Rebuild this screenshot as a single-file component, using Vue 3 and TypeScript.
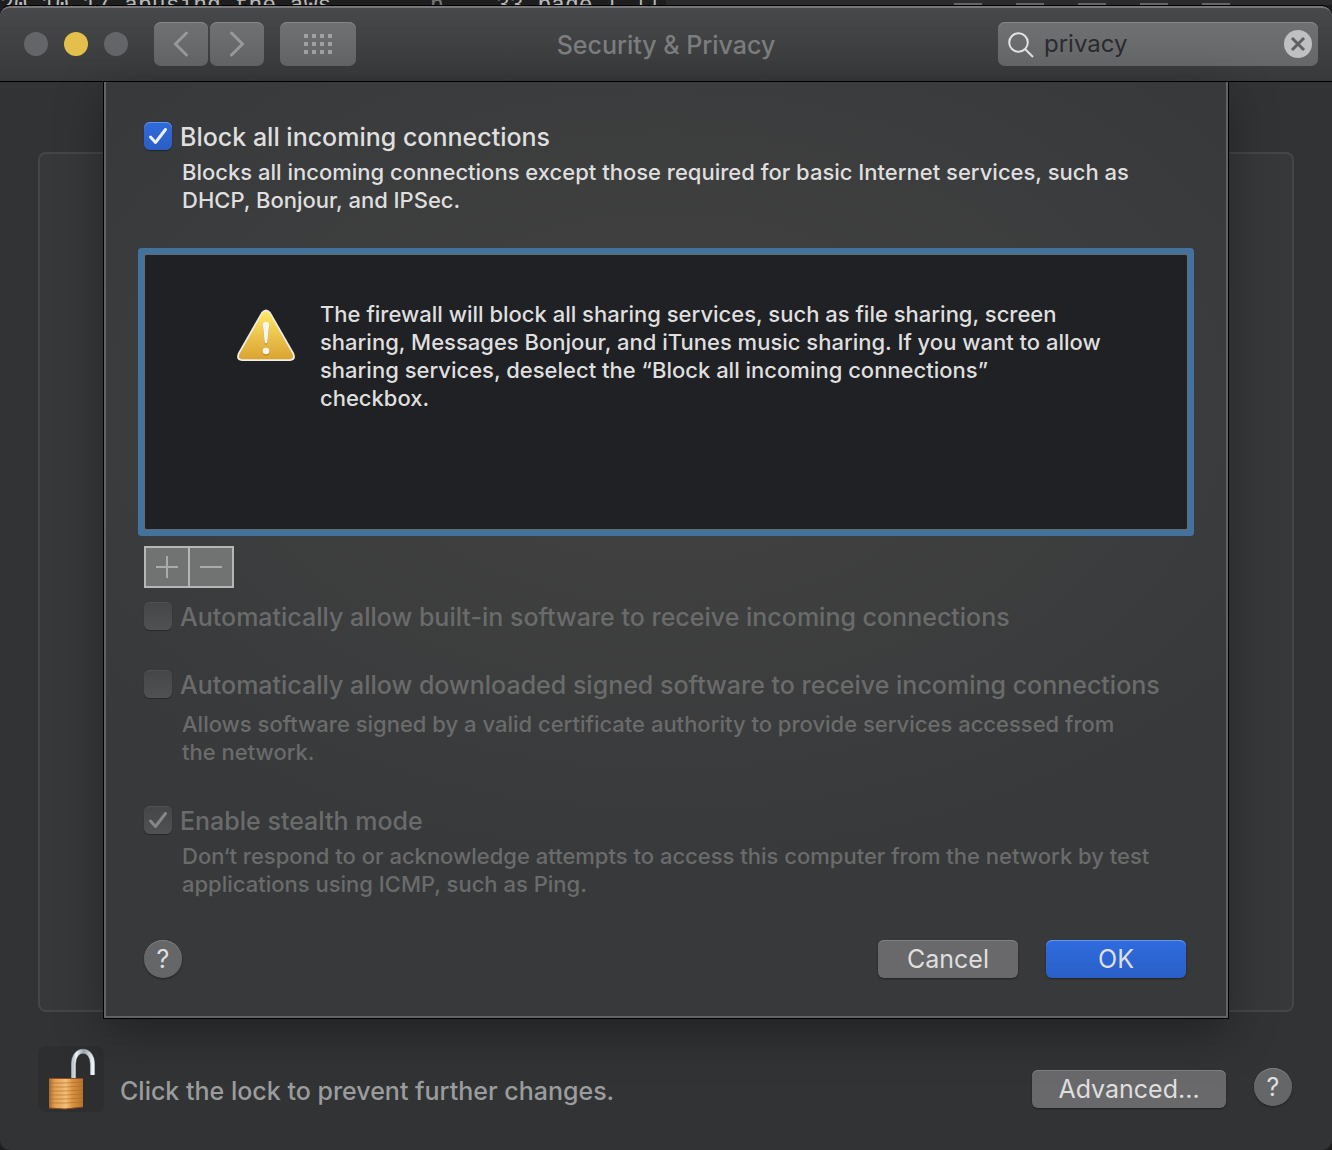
<script setup lang="ts">
import { ref } from 'vue'

interface Option {
  id: string
  label: string
  note: string[]
  roomy: boolean
  checked: boolean
}

const query = ref('privacy')
const blockAll = ref(true)

const options = ref<Option[]>([
  {
    id: 'builtin',
    label: 'Automatically allow built-in software to receive incoming connections',
    note: [],
    roomy: false,
    checked: false,
  },
  {
    id: 'signed',
    label: 'Automatically allow downloaded signed software to receive incoming connections',
    note: ['Allows software signed by a valid certificate authority to provide services accessed from', 'the network.'],
    roomy: true,
    checked: false,
  },
  {
    id: 'stealth',
    label: 'Enable stealth mode',
    note: ['Don‘t respond to or acknowledge attempts to access this computer from the network by test', 'applications using ICMP, such as Ping.'],
    roomy: false,
    checked: true,
  },
])

const dots: number[][] = []
for (let row = 0; row < 3; row++) {
  for (let col = 0; col < 4; col++) dots.push([col * 8, row * 8])
}

const grooves = [5, 9, 13, 17, 21, 25]
</script>

<template>
  <div class="desktop">
    <div class="behind" aria-hidden="true">
      <span class="behind-file">20-10-17-abusing-the-aws-</span>
      <span class="behind-key">h</span>
      <span class="behind-page">33 page [ ||</span>
      <span class="behind-bar"><i></i><i></i><i></i><i></i><i></i></span>
    </div>

    <div class="window">
      <header class="toolbar">
        <div class="tools">
          <div class="lights">
            <button class="light" aria-label="Close"></button>
            <button class="light amber" aria-label="Minimize"></button>
            <button class="light" aria-label="Zoom"></button>
          </div>
          <div class="nav">
            <button class="tool" aria-label="Back">
              <svg width="16" height="26" viewBox="0 0 16 26"><path d="M13.500 2 2.500 13l11 11" /></svg>
            </button>
            <button class="tool" aria-label="Forward">
              <svg width="16" height="26" viewBox="0 0 16 26"><path d="M2.500 2l11 11-11 11" /></svg>
            </button>
          </div>
          <button class="tool wide" aria-label="Show all">
            <svg width="28" height="20" viewBox="0 0 28 20">
              <rect v-for="d in dots" :key="d.join()" :x="d[0]" :y="d[1]" width="4" height="4" />
            </svg>
          </button>
        </div>
        <h1 class="title">Security &amp; Privacy</h1>
        <label class="search">
          <svg class="lens" width="26" height="26" viewBox="0 0 26 26">
            <circle cx="10.500" cy="11.500" r="9.300" />
            <path d="M17 18l8 8" />
          </svg>
          <input v-model="query" type="text" aria-label="Search" />
          <button class="clear" aria-label="Clear search" @click="query = ''">
            <svg width="28" height="28" viewBox="0 0 28 28">
              <circle cx="14" cy="14" r="14" />
              <path d="M8 8l12 12M20 8L8 20" />
            </svg>
          </button>
        </label>
      </header>

      <div class="body">
        <div class="pane"></div>
        <section class="sheet">
          <div class="row">
            <span class="box">
              <input id="block" v-model="blockAll" type="checkbox" />
              <svg v-if="blockAll" width="28" height="28" viewBox="0 0 28 28"><path d="M6.500 15l5 5.500L21.500 7.500" /></svg>
            </span>
            <label for="block">Block all incoming connections</label>
          </div>
          <p class="note">
            Blocks all incoming connections except those required for basic Internet services, such as<br />
            DHCP, Bonjour, and IPSec.
          </p>

          <div class="list" tabindex="0">
            <svg class="warning" width="60" height="54" viewBox="0 0 60 54">
              <defs>
                <linearGradient id="warn" x1="0" y1="0" x2="0" y2="1">
                  <stop offset="0" stop-color="#ffea62" />
                  <stop offset="0.550" stop-color="#e9c04a" />
                  <stop offset="1" stop-color="#dba431" />
                </linearGradient>
              </defs>
              <path
                d="M25.500 4Q30-1 34.500 4L58 45Q61 52.500 54 53H6Q-1 52.500 2 45Z"
                fill="#ededea"
              />
              <path d="M26.500 5.500Q30 1 33.500 5.500L56.500 46Q58.500 51 54 51.200H6Q1.500 51 3.500 46Z" fill="url(#warn)" />
              <path d="M26.800 18.200Q26.800 15 30 15T33.200 18.200L31.300 35.700Q30 37.500 28.700 35.700Z" fill="#b58a2a" />
              <path d="M26.800 17Q26.800 13.800 30 13.800T33.200 17L31.300 34.500Q30 36.500 28.700 34.500Z" fill="#f5f4ee" />
              <circle cx="30" cy="44" r="3.400" fill="#b58a2a" />
              <circle cx="30" cy="43" r="3.300" fill="#f5f4ee" />
            </svg>
            <p>
              The firewall will block all sharing services, such as file sharing, screen<br />
              sharing, Messages Bonjour, and iTunes music sharing. If you want to allow<br />
              sharing services, deselect the “Block all incoming connections”<br />
              checkbox.
            </p>
          </div>

          <div class="pair">
            <button disabled aria-label="Add">
              <svg width="22" height="22" viewBox="0 0 22 22"><path d="M0 11h22M11 0v22" /></svg>
            </button>
            <button disabled aria-label="Remove">
              <svg width="22" height="22" viewBox="0 0 22 22"><path d="M0 11h22" /></svg>
            </button>
          </div>

          <div v-for="o in options" :key="o.id" class="option" :class="{ roomy: o.roomy }">
            <div class="row">
              <span class="box">
                <input :id="o.id" v-model="o.checked" type="checkbox" disabled />
                <svg v-if="o.checked" width="28" height="28" viewBox="0 0 28 28"><path d="M6.500 15l5 5.500L21.500 7.500" /></svg>
              </span>
              <label :for="o.id">{{ o.label }}</label>
            </div>
            <p v-if="o.note.length" class="note">
              <template v-for="(line, n) in o.note" :key="n"><br v-if="n" />{{ line }}</template>
            </p>
          </div>

          <div class="actions">
            <button class="help">?</button>
            <span class="buttons">
              <button class="push">Cancel</button>
              <button class="push primary">OK</button>
            </span>
          </div>
        </section>
      </div>

      <footer class="footer">
        <button class="lock" aria-label="Lock">
          <svg width="66" height="66" viewBox="0 0 66 66">
            <defs>
              <linearGradient id="brassL" x1="0" x2="1">
                <stop offset="0" stop-color="#a8652a" />
                <stop offset="0.300" stop-color="#dd9c50" />
                <stop offset="1" stop-color="#f2be74" />
              </linearGradient>
              <linearGradient id="brassR" x1="0" x2="1">
                <stop offset="0" stop-color="#f3c57e" />
                <stop offset="0.400" stop-color="#d99343" />
                <stop offset="1" stop-color="#b8732c" />
              </linearGradient>
              <linearGradient id="steel" x1="0" x2="1">
                <stop offset="0" stop-color="#c3ccd0" />
                <stop offset="0.150" stop-color="#f2f6f7" />
                <stop offset="0.550" stop-color="#98a4aa" />
                <stop offset="1" stop-color="#eef3f5" />
              </linearGradient>
            </defs>
            <path d="M35.500 33V18C35.500 1 54.500 1 54.500 18v11" fill="none" stroke="#66747b" stroke-width="5" />
            <path d="M35.500 33V18C35.500 1 54.500 1 54.500 18v11" fill="none" stroke="url(#steel)" stroke-width="4" />
            <path d="M11 32h17v31L11 62Z" fill="url(#brassL)" />
            <path d="M27 32h18v29l-18 2Z" fill="url(#brassR)" />
            <path
              v-for="g in grooves"
              :key="g"
              :d="`M11 ${32 + g}h16l18-1`"
              fill="none"
              stroke="#a9662a"
              stroke-opacity="0.550"
              stroke-width="1"
            />
            <path d="M11 32.500h34M11 62l16 1 18-2" fill="none" stroke="#8c4c1c" stroke-width="1" />
          </svg>
        </button>
        <span class="lock-text">Click the lock to prevent further changes.</span>
        <button class="push advanced">Advanced...</button>
        <button class="help">?</button>
      </footer>
    </div>
  </div>
</template>

<style>
body {
  margin: 0;
  background: #1e1e1f;
}
</style>

<style scoped>
.desktop {
  display: flex;
  flex-direction: column;
  min-height: 100vh;
  font-family: Inter, "Liberation Sans", sans-serif;
  font-size: 25px;
  color: #dfdfdf;
}

button,
input {
  font: inherit;
  color: inherit;
  margin: 0;
  padding: 0;
  border: 0;
}

h1,
p {
  margin: 0;
}

svg {
  display: block;
}

.behind {
  display: flex;
  height: 5px;
  overflow: hidden;
  background: #1e1e1f;
  color: #b9b9b9;
  font: 23px/12px "Liberation Mono", monospace;
  white-space: pre;
}

.behind-file {
  flex: none;
  width: 430px;
}

.behind-key {
  width: 66px;
  color: #777;
}

.behind-page {
  width: 170px;
}

.behind-bar {
  flex: 1;
  display: flex;
  align-items: flex-end;
  gap: 34px;
  padding-left: 288px;
  background: #2b2b2d;
}

.behind-bar i {
  width: 28px;
  height: 2px;
  background: #666;
}

.window {
  flex: 1;
  display: flex;
  flex-direction: column;
  overflow: hidden;
  border-top: 1px solid #000;
  border-radius: 10px;
  background: #323335;
}

.toolbar {
  display: grid;
  grid-template-columns: 1fr auto 1fr;
  align-items: center;
  height: 76px;
  box-sizing: border-box;
  padding: 0 14px 2px;
  border-top: 2px solid #77777a;
  border-bottom: 1px solid #000;
  border-radius: 10px 10px 0 0;
  background: linear-gradient(#474849, #38393a);
}

.tools,
.lights,
.nav {
  display: flex;
  align-items: center;
}

.lights {
  gap: 16px;
  margin: 0 26px 0 10px;
}

.light {
  width: 24px;
  height: 24px;
  border-radius: 50%;
  background: #646568;
}

.light.amber {
  background: #e3c04c;
}

.nav {
  gap: 2px;
  margin-right: 16px;
}

.tool {
  display: grid;
  place-items: center;
  width: 54px;
  height: 44px;
  border-radius: 7px;
  background: linear-gradient(#6f7072, #646567);
  box-shadow: inset 0 1px #858688;
}

.tool.wide {
  width: 76px;
}

.tool path {
  fill: none;
  stroke: #98999b;
  stroke-width: 3;
  stroke-linecap: round;
}

.tool rect {
  fill: #a0a1a2;
}

.title {
  padding-top: 2px;
  font-size: 25px;
  font-weight: 500;
  color: #7c7d7f;
}

.search {
  justify-self: end;
  display: flex;
  align-items: center;
  width: 320px;
  height: 44px;
  box-sizing: border-box;
  padding: 0 6px 0 10px;
  border-radius: 7px;
  background: linear-gradient(#6f7072, #666769);
  box-shadow: inset 0 1px #858688;
}

.search input {
  flex: 1;
  min-width: 0;
  margin-left: 10px;
  background: none;
  outline: none;
  font-size: 24px;
  color: #2a2b2d;
}

.lens {
  overflow: visible;
}

.lens circle,
.lens path {
  fill: none;
  stroke: #e4e4e4;
  stroke-width: 2;
}

.clear {
  background: none;
}

.clear circle {
  fill: #bfc0c1;
}

.clear path {
  fill: none;
  stroke: #5f6062;
  stroke-width: 3;
}

.body {
  flex: 1;
  display: grid;
}

.pane,
.sheet {
  grid-area: 1 / 1;
}

.pane {
  margin: 70px 38px 6px;
  border: 2px solid #454648;
  border-radius: 8px;
  background: #37383a;
}

.sheet {
  position: relative;
  margin: 0 104px;
  padding: 40px 40px 38px 38px;
  border: 2px solid #626364;
  border-top: 0;
  background:
    radial-gradient(ellipse 65% 50% at 50% 35%, #434342, transparent),
    #38393b;
  box-shadow: 0 0 0 1px #000, 0 14px 44px rgba(0, 0, 0, 0.35);
}

.row {
  display: flex;
  align-items: center;
  gap: 8px;
  height: 28px;
  white-space: nowrap;
}

.row label {
  padding-top: 2px;
  font-weight: 500;
}

.box {
  display: grid;
}

.box input,
.box svg {
  grid-area: 1 / 1;
}

.box input {
  appearance: none;
  width: 28px;
  height: 28px;
  border-radius: 6px;
  background: linear-gradient(#454647, #505152);
  box-shadow: inset 0 1px #505152, 0 1px 1px rgba(0, 0, 0, 0.3);
}

.box input:checked:enabled {
  background: linear-gradient(#2f6bdd, #2a5ec4);
  box-shadow: inset 0 1px #6592e6, 0 1px 1px rgba(0, 0, 0, 0.4);
}

.box svg {
  pointer-events: none;
}

.box path {
  fill: none;
  stroke: #edf1fb;
  stroke-width: 3;
  stroke-linecap: round;
  stroke-linejoin: round;
}

.option .box path {
  stroke: #858686;
}

.note {
  margin: 8px 0 0 38px;
  font-size: 22px;
  font-weight: 450;
  line-height: 28px;
  white-space: nowrap;
}

.list {
  display: flex;
  align-items: flex-start;
  height: 274px;
  box-sizing: border-box;
  margin: 41px 0 17px 1px;
  padding: 45px 0 0 91px;
  outline: 1px solid #65696d;
  background: #202124;
  box-shadow: 0 0 0 7px #43729c;
  border-radius: 1px;
  font-size: 22px;
  font-weight: 450;
  line-height: 28px;
  white-space: nowrap;
}

.list {
  margin-right: -1px;
}

.warning {
  margin: 8px 24px 0 0;
}

.pair {
  display: flex;
  width: 90px;
  height: 42px;
  box-sizing: border-box;
  border: 2px solid #b5b6b6;
  margin-bottom: 14px;
}

.pair button {
  flex: 1;
  display: grid;
  place-items: center;
  background: #717272;
}

.pair button + button {
  border-left: 2px solid #b5b6b6;
}

.pair path {
  fill: none;
  stroke: #a9aaaa;
  stroke-width: 2;
}

.option {
  color: #6a6b6b;
  margin-bottom: 40px;
}

.option.roomy .note {
  margin-top: 12px;
}

.actions {
  display: flex;
  align-items: center;
  justify-content: space-between;
  padding-top: 2px;
}

.buttons {
  display: flex;
  gap: 28px;
}

.push {
  width: 140px;
  height: 38px;
  border-radius: 6px;
  background: #69696b;
  box-shadow: inset 0 1px #818183, 0 1px 2px rgba(0, 0, 0, 0.4);
}

.push.primary {
  background: linear-gradient(#2f6ce0, #2a5fc6);
  box-shadow: inset 0 1px #6b97e8, 0 1px 2px rgba(0, 0, 0, 0.4);
}

.help {
  width: 38px;
  height: 38px;
  border-radius: 50%;
  background: #656668;
  box-shadow: inset 0 1px #7c7d7f, 0 1px 2px rgba(0, 0, 0, 0.4);
}

.footer {
  display: flex;
  align-items: flex-end;
  padding: 28px 40px 38px 38px;
}

.lock {
  width: 66px;
  height: 66px;
  border-radius: 8px;
  background: #2d2e30;
}

.lock-text {
  flex: 1;
  margin: 0 0 6px 16px;
  line-height: 30px;
  font-weight: 500;
  color: #9b9c9d;
}

.push.advanced {
  width: 194px;
  margin: 0 28px 4px 0;
}

.footer .help {
  margin-bottom: 6px;
}
</style>
